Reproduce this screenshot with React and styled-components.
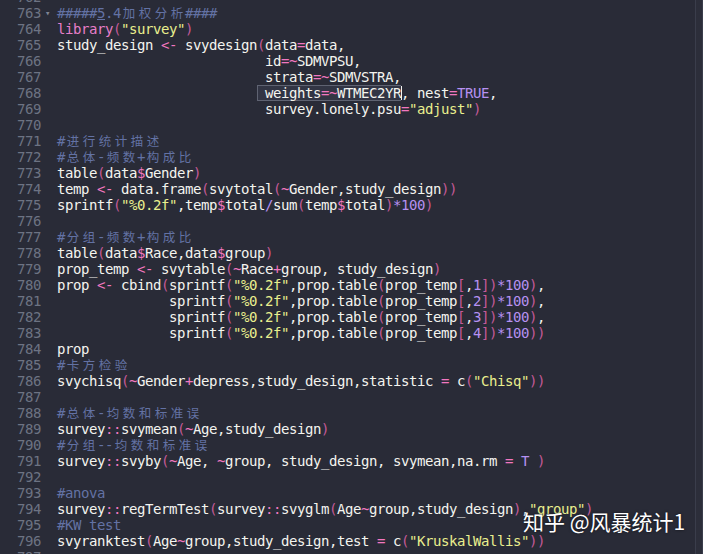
import { createGlobalStyle, styled } from "styled-components";

const GlobalStyle = createGlobalStyle`
  html, body {
    margin: 0;
    padding: 0;
    background: #292b37;
  }
`;

const Editor = styled.div`
  position: relative;
  display: flex;
  width: 703px;
  height: 554px;
  overflow: hidden;
  background: #292b37;
  font-family: "DejaVu Sans Mono", "Liberation Mono", monospace;
  font-size: 14px;
  letter-spacing: -0.43px;
  color: #f4f4ef;
`;

const Lines = styled.div`
  flex: 1;
  margin-top: -11px;
`;

const Row = styled.div`
  display: grid;
  grid-template-columns: 41px 16px 1fr;
  height: 16px;
  line-height: 16px;
  white-space: pre;
`;

const LineNo = styled.span`
  text-align: right;
  color: #6d7383;
`;

const Fold = styled.span`
  color: #7f8594;
  font-size: 9px;
  padding-left: 4px;
`;

const Code = styled.span`
  white-space: pre;
`;

const colors = {
  t: "#f4f4ef",
  o: "#f277c0",
  p: "#c45a98",
  s: "#e9ef8e",
  n: "#b691f2",
  c: "#6372a4",
  k: "#e77ec8",
};

const Tok = styled.span`
  color: ${(p) => colors[p.$kind]};
  text-decoration: ${(p) => (p.$under ? "underline" : "none")};
`;

const Wide = styled.span`
  display: inline-block;
  width: 16px;
  letter-spacing: 0;
  text-align: center;
  font-family: "Noto Sans CJK SC", sans-serif;
  font-size: 12.5px;
  vertical-align: top;
`;

const Match = styled.span`
  margin-left: -8px;
  padding-left: 7px;
  border: 1px solid #5f6372;
  border-right: none;
  background: #323544;
  line-height: 14px;
  display: inline-block;
`;

const Cursor = styled.span`
  display: inline-block;
  width: 1px;
  height: 14px;
  margin-right: -1px;
  background: #f4f4ef;
  vertical-align: -2px;
`;

const ScrollEdge = styled.div`
  width: 6px;
  border-left: 1px solid #3a3d4b;
  border-right: 1px solid #3a3d4b;
  background: #2c2e3a;
`;

const Watermark = styled.div`
  position: absolute;
  left: 523px;
  top: 511px;
  font-family: "Noto Sans CJK SC", sans-serif;
  font-size: 21px;
  letter-spacing: 0;
  line-height: 1;
  color: #ffffff;
  text-shadow: 0 0 3px rgba(0, 0, 0, 0.6);
  white-space: pre;
`;

const cjk = /[\u3400-\u9fff]/;

function renderText(text) {
  const out = [];
  let buf = "";
  [...text].forEach((ch, i) => {
    if (cjk.test(ch)) {
      if (buf) out.push(buf);
      buf = "";
      out.push(<Wide key={i}>{ch}</Wide>);
    } else buf += ch;
  });
  if (buf) out.push(buf);
  return out;
}

const pad = (n) => " ".repeat(n);

const sprintfLine = (i, end) => [
  ["t", "sprintf"], ["p", "("], ["s", '"%0.2f"'], ["t", ",prop.table"], ["p", "("],
  ["t", "prop_temp"], ["p", "["], ["t", ","], ["n", String(i)], ["p", "])"],
  ["n", "*100"], ["p", end === "," ? ")" : "))"], ["t", end === "," ? "," : ""],
];

const code = [
  [762, []],
  [763, [["c", "#####"], ["c", "5", true], ["c", ".4加权分析####"]], true],
  [764, [["k", "library"], ["p", "("], ["s", '"survey"'], ["p", ")"]]],
  [765, [["t", "study_design "], ["o", "<-"], ["t", " svydesign"], ["p", "("], ["t", "data"], ["o", "="], ["t", "data,"]]],
  [766, [["t", pad(26) + "id"], ["o", "=~"], ["t", "SDMVPSU,"]]],
  [767, [["t", pad(26) + "strata"], ["o", "=~"], ["t", "SDMVSTRA,"]]],
  [768, "match"],
  [769, [["t", pad(26) + "survey.lonely.psu"], ["o", "="], ["s", '"adjust"'], ["p", ")"]]],
  [770, []],
  [771, [["c", "#进行统计描述"]]],
  [772, [["c", "#总体-频数+构成比"]]],
  [773, [["t", "table"], ["p", "("], ["t", "data"], ["o", "$"], ["t", "Gender"], ["p", ")"]]],
  [774, [["t", "temp "], ["o", "<-"], ["t", " data.frame"], ["p", "("], ["t", "svytotal"], ["p", "("], ["o", "~"], ["t", "Gender,study_design"], ["p", "))"]]],
  [775, [["t", "sprintf"], ["p", "("], ["s", '"%0.2f"'], ["t", ",temp"], ["o", "$"], ["t", "total"], ["n", "/"], ["t", "sum"], ["p", "("], ["t", "temp"], ["o", "$"], ["t", "total"], ["p", ")"], ["n", "*100"], ["p", ")"]]],
  [776, []],
  [777, [["c", "#分组-频数+构成比"]]],
  [778, [["t", "table"], ["p", "("], ["t", "data"], ["o", "$"], ["t", "Race,data"], ["o", "$"], ["t", "group"], ["p", ")"]]],
  [779, [["t", "prop_temp "], ["o", "<-"], ["t", " svytable"], ["p", "("], ["o", "~"], ["t", "Race"], ["o", "+"], ["t", "group, study_design"], ["p", ")"]]],
  [780, [["t", "prop "], ["o", "<-"], ["t", " cbind"], ["p", "("], ...sprintfLine(1, ",")]],
  [781, [["t", pad(14)], ...sprintfLine(2, ",")]],
  [782, [["t", pad(14)], ...sprintfLine(3, ",")]],
  [783, [["t", pad(14)], ...sprintfLine(4, ")")]],
  [784, [["t", "prop"]]],
  [785, [["c", "#卡方检验"]]],
  [786, [["t", "svychisq"], ["p", "("], ["o", "~"], ["t", "Gender"], ["o", "+"], ["t", "depress,study_design,statistic "], ["o", "="], ["t", " c"], ["p", "("], ["s", '"Chisq"'], ["p", "))"]]],
  [787, []],
  [788, [["c", "#总体-均数和标准误"]]],
  [789, [["t", "survey"], ["o", "::"], ["t", "svymean"], ["p", "("], ["o", "~"], ["t", "Age,study_design"], ["p", ")"]]],
  [790, [["c", "#分组--均数和标准误"]]],
  [791, [["t", "survey"], ["o", "::"], ["t", "svyby"], ["p", "("], ["o", "~"], ["t", "Age, "], ["o", "~"], ["t", "group, study_design, svymean,na.rm "], ["o", "="], ["t", " "], ["n", "T"], ["t", " "], ["p", ")"]]],
  [792, []],
  [793, [["c", "#anova"]]],
  [794, [["t", "survey"], ["o", "::"], ["t", "regTermTest"], ["p", "("], ["t", "survey"], ["o", "::"], ["t", "svyglm"], ["p", "("], ["t", "Age"], ["o", "~"], ["t", "group,study_design"], ["p", ")"], ["t", ","], ["s", '"group"'], ["p", ")"]]],
  [795, [["c", "#KW test"]]],
  [796, [["t", "svyranktest"], ["p", "("], ["t", "Age"], ["o", "~"], ["t", "group,study_design,test "], ["o", "="], ["t", " c"], ["p", "("], ["s", '"KruskalWallis"'], ["p", "))"]]],
  [797, []],
];

const Tokens = ({ list }) =>
  list.map(([kind, text, under], i) => (
    <Tok key={i} $kind={kind} $under={under}>
      {renderText(text)}
    </Tok>
  ));

const MatchLine = () => (
  <>
    <Tok $kind="t">{pad(26)}</Tok>
    <Match>
      <Tokens list={[["t", "weights"], ["o", "=~"], ["t", "WTMEC2YR"]]} />
    </Match>
    <Cursor />
    <Tokens list={[["t", ", nest"], ["o", "="], ["n", "TRUE"], ["t", ","]]} />
  </>
);

export default function App() {
  return (
    <>
      <GlobalStyle />
      <Editor>
        <Lines>
          {code.map(([no, toks, fold]) => (
            <Row key={no}>
              <LineNo>{no}</LineNo>
              <Fold>{fold ? "▾" : ""}</Fold>
              <Code>{toks === "match" ? <MatchLine /> : <Tokens list={toks} />}</Code>
            </Row>
          ))}
        </Lines>
        <ScrollEdge />
        <Watermark>知乎 @风暴统计1</Watermark>
      </Editor>
    </>
  );
}
